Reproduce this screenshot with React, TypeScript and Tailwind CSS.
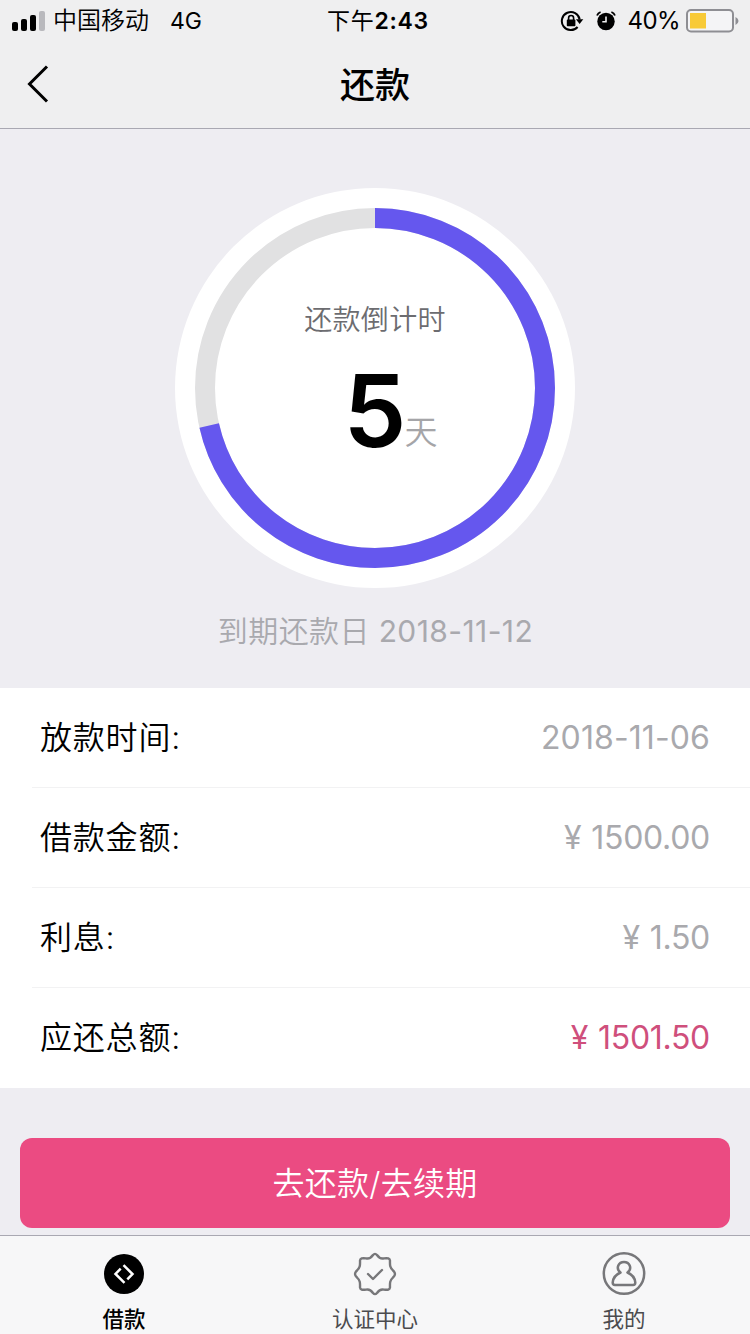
import React from "react";

const TOTAL_DAYS = 7;
const DAYS_LEFT = 5;
const RADIUS = 170;
const CIRCUMFERENCE = 2 * Math.PI * RADIUS;

function StatusBar() {
  return (
    <div className="grid h-10 grid-cols-3 items-center pt-px text-black">
      <div className="flex items-center pl-3">
        <svg width="33" height="20" viewBox="0 0 33 20">
          <rect x="0" y="11" width="6" height="9" rx="2" />
          <rect x="9" y="8" width="6" height="12" rx="2" />
          <rect x="18" y="4" width="6" height="16" rx="2" />
          <rect x="27" y="0" width="6" height="20" rx="2" fill="#b9b9bd" />
        </svg>
        <span className="ml-2 text-[24px] leading-10 font-[350] whitespace-nowrap">中国移动</span>
        <span className="ml-[21px] text-[23px] leading-10">4G</span>
      </div>
      <div className="pl-[6px] text-center text-[23px] leading-10 font-semibold tracking-[0.7px] whitespace-nowrap">
        <span className="font-normal">下午</span>2:43
      </div>
      <div className="flex items-center justify-end pr-[11px]">
        <svg width="24" height="22" viewBox="0 0 24 22" fill="none" stroke="#000" strokeWidth="2">
          <path d="M17.6 17A9 9 0 1 1 19.7 9.5" />
          <path d="M15.9 9.300h7.400l-3.700 4.700z" fill="#000" stroke="none" />
          <rect x="6.8" y="9.6" width="8.6" height="6.6" rx="0.8" fill="#000" stroke="none" />
          <path d="M8.6 10V8a2.5 2.5 0 0 1 5 0v2" strokeWidth="1.6" />
        </svg>
        <svg className="ml-[12px]" width="20" height="20" viewBox="0 0 20 20" fill="none">
          <circle cx="10" cy="10.5" r="8.7" fill="#000" />
          <path d="M10 5.5v5.3H6.3" stroke="#efeff0" strokeWidth="1.6" />
          <path d="M1 4.5Q2 2 4.6 1M19 4.5Q18 2 15.4 1" stroke="#000" strokeWidth="1.8" />
        </svg>
        <span className="ml-3 text-[24px] leading-10 tracking-[-0.6px]">40%</span>
        <svg className="ml-[6px]" width="53" height="24" viewBox="0 0 53 24">
          <rect x="1" y="1" width="46" height="21.5" rx="4" fill="#f4f4f6" stroke="#8e8e93" strokeWidth="2" />
          <rect x="4" y="4" width="16" height="15.5" fill="#f8ca37" />
          <path d="M49.5 8q3 1.5 3 4t-3 4z" fill="#8e8e93" />
        </svg>
      </div>
    </div>
  );
}

function NavBar() {
  return (
    <div className="grid h-22 grid-cols-[80px_1fr_80px] items-center">
      <svg className="ml-[27px]" width="22" height="38" viewBox="0 0 22 38" fill="none" stroke="#000" strokeWidth="3">
        <path d="M20 1.5 2.5 19 20 36.5" />
      </svg>
      <h1 className="pt-0.5 text-center text-[35px] leading-[86px] font-medium">还款</h1>
    </div>
  );
}

function Countdown() {
  return (
    <section className="flex h-[559px] flex-col items-center pt-[59px]">
      <div className="grid size-[400px] place-items-center rounded-full bg-white *:[grid-area:1/1]">
        <svg width="400" height="400" viewBox="0 0 400 400" fill="none" strokeWidth="20">
          <circle cx="200" cy="200" r={RADIUS} stroke="#e1e1e2" />
          <circle
            cx="200"
            cy="200"
            r={RADIUS}
            stroke="#6557ee"
            strokeDasharray={`${(CIRCUMFERENCE * DAYS_LEFT) / TOTAL_DAYS} ${CIRCUMFERENCE}`}
            transform="rotate(-90 200 200)"
          />
        </svg>
        <div className="flex h-full flex-col items-center pt-[112px]">
          <p className="text-[28px] leading-10 font-[350] tracking-[0.3px] text-[#6c6c70]">还款倒计时</p>
          <p className="mt-1 flex items-start pl-[31px]">
            <span className="pt-1 text-[100px] leading-[126px] font-semibold tracking-[-3px] text-black">{DAYS_LEFT}</span>
            <span className="ml-px pt-[68px] text-[33px] leading-10 font-[350] text-[#a5a5a8]">天</span>
          </p>
        </div>
      </div>
      <p className="mt-[23px] pl-px text-[30px] leading-10 font-[350] tracking-[0.4px] text-[#a9a9ae]">
        到期还款日 <span className="font-normal">2018-11-12</span>
      </p>
    </section>
  );
}

const ROWS = [
  { label: "放款时间:", value: "2018-11-06" },
  { label: "借款金额:", value: "1500.00", money: true },
  { label: "利息:", value: "1.50", money: true },
  { label: "应还总额:", value: "1501.50", money: true, due: true },
];

function Details() {
  return (
    <section className="h-[400px] bg-white">
      {ROWS.map((row, i) => (
        <div
          key={row.label}
          className={`ml-8 flex h-[100px] items-center justify-between pr-10 pl-2 text-[32px] ${
            i < ROWS.length - 1 ? "border-b border-[#f2f2f3]" : ""
          }`}
        >
          <span className="font-[350] tracking-[0.8px] text-black">{row.label}</span>
          <span
            className={`font-normal ${row.money ? "tracking-[-0.3px]" : "tracking-[0.1px]"} ${
              row.due ? "text-[#cf4f7c]" : "text-[#a9a9ad]"
            }`}
          >
            {row.money && <span className="mr-[10px]">¥</span>}
            {row.value}
          </span>
        </div>
      ))}
    </section>
  );
}

function LoanIcon() {
  return (
    <svg width="44" height="44" viewBox="0 0 44 44" fill="none">
      <circle cx="22" cy="22" r="20" fill="#000" />
      <path d="M18.700 16.600 13.500 22 22.500 30.800M21.500 13.200 30.500 22 25.300 27.400" stroke="#fff" strokeWidth="2.5" />
    </svg>
  );
}

function VerifyIcon() {
  return (
    <svg width="44" height="44" viewBox="0 0 44 44" fill="none" stroke="#77777a" strokeWidth="2.4" strokeLinejoin="round" strokeLinecap="round">
      <path d="M20 3Q22 .7 24 3C26 6 28 7.100 31 6.400Q36.700 5.500 37 8.500C36.800 13.500 36.900 15.500 40 18.500Q44 22 40 25.500C36.900 28.500 36.800 30.500 37 35.500Q36.700 38.500 31 37.600C28 36.900 26 38 24 41Q22 43.300 20 41C18 38 16 36.900 13 37.600Q7.300 38.500 7 35.500C7.200 30.500 7.100 28.500 4 25.500Q0 22 4 18.500C7.100 15.500 7.200 13.500 7 8.500Q7.300 5.500 13 6.400C16 7.100 18 6 20 3Z" />
      <path d="m15 22 5 5 9-9" />
    </svg>
  );
}

function ProfileIcon() {
  return (
    <svg width="44" height="44" viewBox="0 0 44 44" fill="none" stroke="#77777a" strokeWidth="2.5" strokeLinejoin="round">
      <circle cx="22" cy="21.500" r="20.200" />
      <path d="M18.500 20.500C15.800 18.500 15.500 15.500 16.300 13.600C18.300 8.800 25.700 8.800 27.700 13.600C28.500 15.500 28.200 18.500 25.500 20.500C30 22.500 33 26 33.300 30.500C33.300 32.300 32.500 33 31 33H13C11.500 33 10.700 32.300 10.700 30.500C11 26 14 22.500 18.500 20.500Z" />
    </svg>
  );
}

const TABS = [
  { label: "借款", Icon: LoanIcon, active: true },
  { label: "认证中心", Icon: VerifyIcon },
  { label: "我的", Icon: ProfileIcon },
];

function TabBar() {
  return (
    <nav className="grid h-[99px] grid-cols-[248px_1fr_248px] border-t border-[#a9a8b2] bg-[#f7f7f8]">
      {TABS.map(({ label, Icon, active }) => (
        <a
          key={label}
          className={`flex flex-col items-center pt-4 text-[21.5px] leading-[30px] last:pr-1 ${
            active ? "font-medium text-black" : "text-[#4b4b4e]"
          }`}
        >
          <Icon />
          <span className="mt-2">{label}</span>
        </a>
      ))}
    </nav>
  );
}

export default function App() {
  return (
    <main className="flex h-[1334px] w-[750px] flex-col overflow-hidden bg-[#eeedf2] font-['Inter','Noto_Sans_CJK_SC',sans-serif]">
      <header className="h-[129px] border-b border-[#a9a8b2] bg-[#efeff0]">
        <StatusBar />
        <NavBar />
      </header>
      <Countdown />
      <Details />
      <div className="h-[147px] px-5 pt-[50px]">
        <button className="h-[90px] w-full rounded-[12px] bg-[#eb4b82] pt-0.5 text-[32px] font-[350] tracking-[0.3px] text-white">
          去还款/去续期
        </button>
      </div>
      <TabBar />
    </main>
  );
}
